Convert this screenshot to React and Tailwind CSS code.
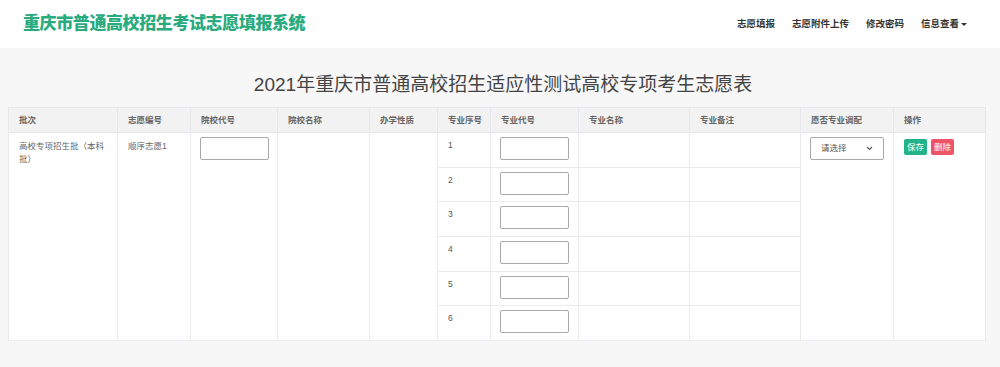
import React from "react";

const cols = [
  { label: "批次", w: 109 },
  { label: "志愿编号", w: 73 },
  { label: "院校代号", w: 87 },
  { label: "院校名称", w: 92 },
  { label: "办学性质", w: 68 },
  { label: "专业序号", w: 53 },
  { label: "专业代号", w: 88 },
  { label: "专业名称", w: 111 },
  { label: "专业备注", w: 111 },
  { label: "愿否专业调配", w: 93 },
  { label: "操作", w: 92 },
];

const rows = [1, 2, 3, 4, 5, 6];

function Box() {
  return (
    <div className="w-[69px] h-[23px] border border-[#a9a9a9] rounded-[2px] bg-white" />
  );
}

export default function App() {
  const td = "border border-[#e9ebee] align-top px-[9px] pt-[4px]";
  return (
    <div
      className="min-h-[367px] bg-[#f7f7f7] text-[#666]"
      style={{ fontFamily: '"Liberation Sans", "Noto Sans CJK SC", sans-serif' }}
    >
      <nav className="h-[48px] bg-white flex items-center justify-between pl-[23px] pr-[33px]">
        <span className="text-[17px] font-black tracking-[-0.4px] text-[#2aab7e]">
          重庆市普通高校招生考试志愿填报系统
        </span>
        <div className="flex items-center gap-[17px] text-[9.5px] font-bold text-[#333]">
          <span>志愿填报</span>
          <span>志愿附件上传</span>
          <span>修改密码</span>
          <span className="flex items-center gap-[2px]">
            信息查看
            <span className="border-x-[3px] border-t-[3px] border-x-transparent border-t-[#333]" />
          </span>
        </div>
      </nav>

      <h1 className="text-center text-[19px] text-[#444] pt-[25px] pb-[10px] leading-[24px] pl-[6px]">
        2021年重庆市普通高校招生适应性测试高校专项考生志愿表
      </h1>

      <div className="pl-[8px]">
        <table className="w-[977px] border-collapse bg-white text-[8.5px] table-fixed">
          <colgroup>
            {cols.map((c) => (
              <col key={c.label} style={{ width: c.w }} />
            ))}
          </colgroup>
          <thead>
            <tr className="h-[25px] bg-[#f2f2f2]">
              {cols.map((c) => (
                <th
                  key={c.label}
                  className="border border-[#e6e8eb] text-left font-semibold text-[#666] px-[10px] whitespace-nowrap"
                >
                  {c.label}
                </th>
              ))}
            </tr>
          </thead>
          <tbody>
            {rows.map((n) => (
              <tr key={n} className="h-[34.7px]">
                {n === 1 && (
                  <>
                    <td rowSpan={6} className={td + " px-[10px] pt-[7px] leading-[13px]"}>
                      高校专项招生批（本科批）
                    </td>
                    <td rowSpan={6} className={td + " px-[10px] pt-[7px] leading-[13px]"}>
                      顺序志愿1
                    </td>
                    <td rowSpan={6} className={td}>
                      <Box />
                    </td>
                    <td rowSpan={6} className={td} />
                    <td rowSpan={6} className={td} />
                  </>
                )}
                <td className={td + " px-[10px] pt-[6px] text-[#555]"}>{n}</td>
                <td className={td}>
                  <Box />
                </td>
                <td className={td} />
                <td className={td} />
                {n === 1 && (
                  <>
                    <td rowSpan={6} className={td}>
                      <div className="w-[74px] h-[23px] border border-[#a9a9a9] rounded-[2px] flex items-center justify-between px-[10px] text-[#555]">
                        <span>请选择</span>
                        <svg width="7" height="5" viewBox="0 0 7 5">
                          <path d="M1 1l2.5 2.5L6 1" stroke="#555" strokeWidth="1.1" fill="none" />
                        </svg>
                      </div>
                    </td>
                    <td rowSpan={6} className={td + " pt-[6px] pl-[10px]"}>
                      <div className="flex gap-[4px]">
                        <span className="bg-[#23b388] text-white rounded-[2px] px-[3px] h-[16px] flex items-center">
                          保存
                        </span>
                        <span className="bg-[#ee5468] text-white rounded-[2px] px-[3px] h-[16px] flex items-center">
                          删除
                        </span>
                      </div>
                    </td>
                  </>
                )}
              </tr>
            ))}
          </tbody>
        </table>
      </div>
    </div>
  );
}
